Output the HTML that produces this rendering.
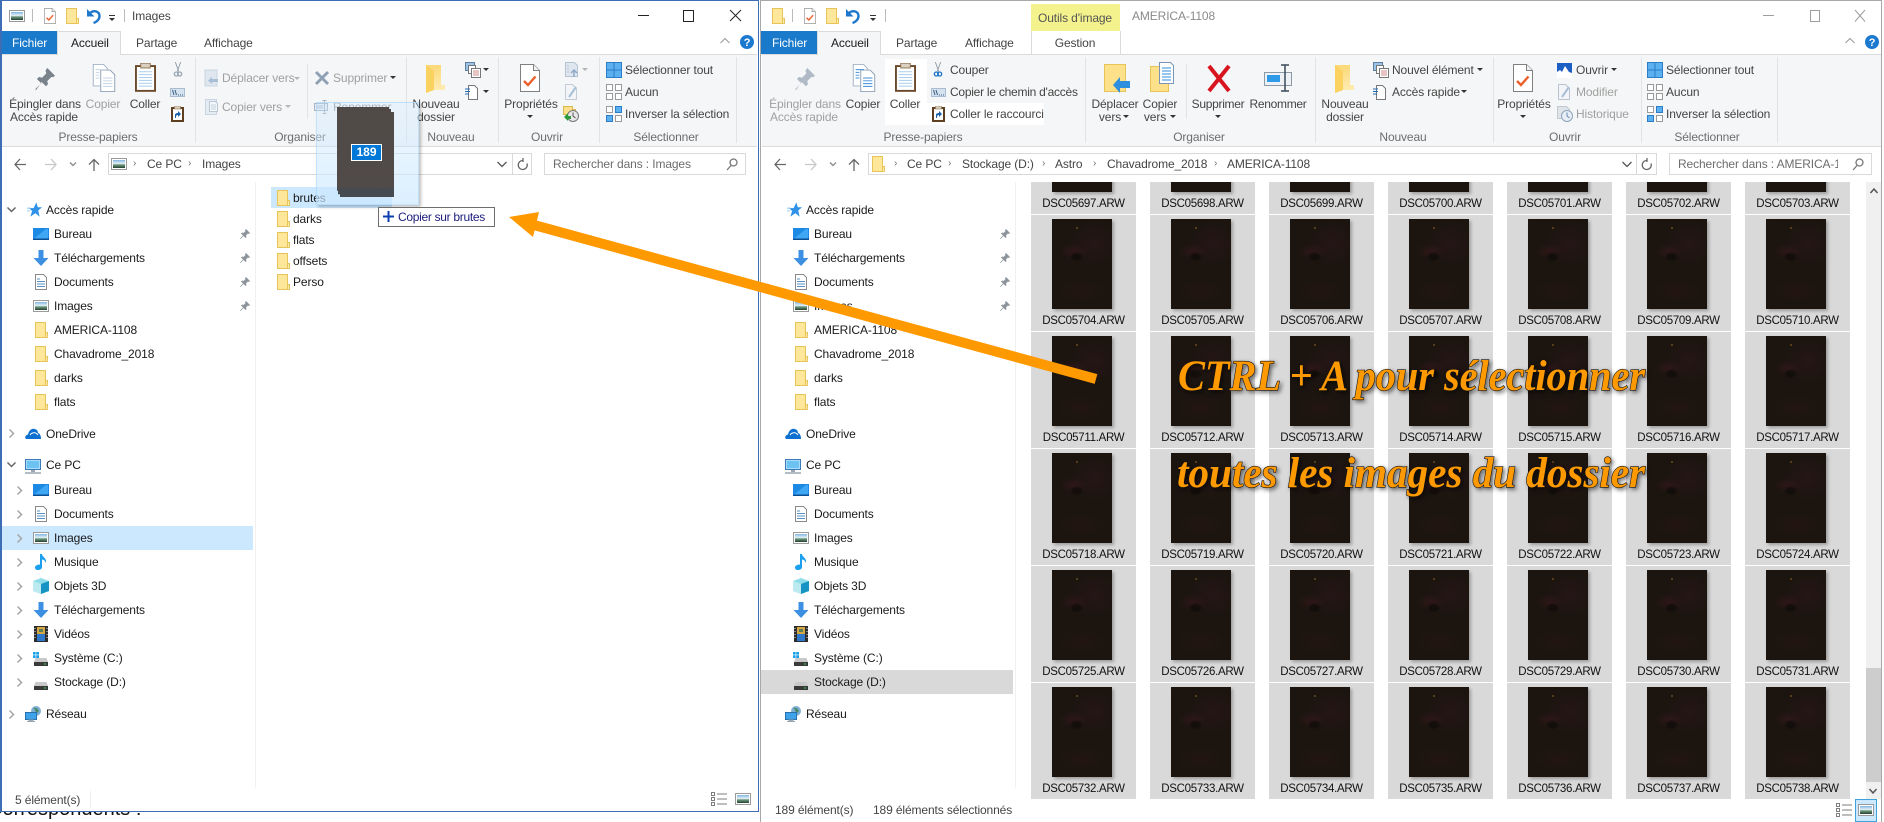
<!DOCTYPE html>
<html><head><meta charset="utf-8"><title>Images</title>
<style>
html,body{margin:0;padding:0;background:#fff}
#r{position:relative;width:1884px;height:822px;overflow:hidden;background:#fff;font:12px "Liberation Sans",sans-serif;color:#1a1a1a;letter-spacing:-.12px}
p{position:absolute;margin:0;white-space:nowrap;line-height:16px;height:16px}
.c{transform:translateX(-50%)}
.g{color:#a0a0a0}.m{color:#6d6d6d}.d{color:#444}
.k{position:absolute}
svg{position:absolute;overflow:visible}
u{position:absolute;width:0;height:0;border-left:3px solid transparent;border-right:3px solid transparent;border-top:3px solid #333}
u.l{border-top-color:#b5b5b5}
.cell{position:absolute;width:105px;height:116px;background:#d9d9d9}
.cell i{position:absolute;left:21px;top:4px;width:60px;height:90px;box-shadow:2px 2px 3px rgba(0,0,0,.28);
background:radial-gradient(circle at 25px 9px,#5f4320 0,#5f4320 .8px,transparent 1.3px),radial-gradient(ellipse 7px 5px at 41% 42%,rgba(14,11,9,.75) 50%,transparent),radial-gradient(ellipse 14px 8px at 36% 36%,rgba(70,24,36,.42),transparent),radial-gradient(ellipse 24px 22px at 70% 28%,rgba(50,22,34,.42),transparent),radial-gradient(ellipse 24px 12px at 50% 80%,rgba(46,20,22,.38),transparent),#1c150f}
.cell span{position:absolute;left:0;width:105px;text-align:center;top:98px;line-height:16px;font-size:11.5px;letter-spacing:-.3px;color:#111}
</style></head><body><div id="r">
<svg width="0" height="0" style="position:absolute">
<defs>
<linearGradient id="sky" x1="0" y1="0" x2="0" y2="1"><stop offset="0" stop-color="#7fb5e0"/><stop offset=".45" stop-color="#e8f2f8"/><stop offset=".6" stop-color="#6f9a80"/><stop offset="1" stop-color="#23402f"/></linearGradient>
<linearGradient id="nfg" x1="0" y1="0" x2="0" y2="1"><stop offset="0" stop-color="#fcd878"/><stop offset="1" stop-color="#fdeeb8"/></linearGradient>
<symbol id="fo" viewBox="0 0 13 16"><path d="M.5.500h10v10h2v5H.5z" fill="#fee79b" stroke="#e7c458"/><path d="M10.500 11v4.500h2" fill="#fff3c4" stroke="#e7c458"/></symbol>
<symbol id="im" viewBox="0 0 16 12"><rect x=".5" y=".5" width="15" height="11" fill="#fff" stroke="#9a9a9a"/><rect x="2" y="2" width="12" height="8" fill="url(#sky)"/></symbol>
<symbol id="de" viewBox="0 0 16 12"><rect width="16" height="12" fill="#1c8ae4"/><path d="M1 10.500L13 1h2v9.500z" fill="#3fa6f4"/><rect y="10.500" width="16" height="1.500" fill="#0a4f93"/></symbol>
<symbol id="dn" viewBox="0 0 16 16"><path d="M5.500 0h5v8h5L8 16 .5 8h5z" fill="#3d8fe2"/></symbol>
<symbol id="dc" viewBox="0 0 12 16"><path d="M.5.500h8l3 3v12H.5z" fill="#fff" stroke="#8a8a8a"/><path d="M2 5h3M2 7.500h8M2 10h8M2 12.500h8" stroke="#5a8fc4"/></symbol>
<symbol id="st" viewBox="0 0 16 16"><path d="M10 0l1.500 5H16l-4 3.500L13.500 15 9 11.500 3.500 15 5.500 9 2 6h5z" fill="#2f92e8"/><path d="M0 6h4M0 9h3" stroke="#8cc6f5"/></symbol>
<symbol id="mu" viewBox="0 0 14 16"><path d="M6 0h2c0 3 5 4 4 9-1-2-2-3.500-4-3.500V13c0 2-2 3-4 3s-3-1-3-2.500S3 10.500 6 10.500z" fill="#1aa0ef"/></symbol>
<symbol id="cu" viewBox="0 0 16 16"><path d="M8 0l8 3v10l-8 3-8-3V3z" fill="#8fdde8"/><path d="M8 6l8-3v10l-8 3z" fill="#1793c4"/><path d="M0 3l8 3v10l-8-3z" fill="#bdeaf0"/></symbol>
<symbol id="fi" viewBox="0 0 14 16"><rect width="14" height="16" fill="#2c2c2c"/><rect x="3" y="1" width="8" height="14" fill="#d4a845"/><rect x="3" y="8" width="8" height="7" fill="#2f78c9"/><rect x="5" y="3" width="4" height="3" fill="#5a7c5c"/><path d="M1 2v12M13 2v12" stroke="#ddd" stroke-dasharray="1 2"/></symbol>
<symbol id="dr" viewBox="0 0 14 8"><path d="M1.500 0h11L14 4v4H0V4z" fill="#c9c9c9"/><rect y="4" width="14" height="4" fill="#3a3a3a"/><rect x="10" y="5.500" width="2" height="1" fill="#35d04c"/></symbol>
<symbol id="wi" viewBox="0 0 6 6"><path d="M0 0h2.600v2.600H0zM3.200 0H6v2.600H3.200zM0 3.200h2.600V6H0zM3.200 3.200H6V6H3.200z" fill="#19a0ea"/></symbol>
<symbol id="cl" viewBox="0 0 16 11"><path d="M2 11c-3 0-2-4 1-4.500C4 2 7 0 10 1c2 .6 3 2 3 4 2 .3 3 3 3 6z" fill="#0d6fd0"/><path d="M5 7c2-3 6-3 8 0" fill="none" stroke="#fff"/></symbol>
<symbol id="pc" viewBox="0 0 16 15"><rect x=".5" y=".5" width="15" height="10" fill="#a8dcf8" stroke="#3a78b8"/><rect x="2" y="2" width="12" height="7" fill="#6cc2f0"/><path d="M6 11h4v2H6z" fill="#9aa6b0"/><path d="M0 14h16" stroke="#9aa6b0" stroke-width="1.500"/></symbol>
<symbol id="ne" viewBox="0 0 16 16"><circle cx="11" cy="5" r="5" fill="#7fb0d8"/><path d="M8 2c2 1 3 3 2 6 2 0 3-2 4-3-1-2-3-4-6-3z" fill="#4b8a6a"/><rect x=".5" y="6.500" width="11" height="7" fill="#3da2e8" stroke="#2a70ae"/><path d="M4 14h4v1H4zM2 15.500h8" stroke="#9aa6b0"/></symbol>
<symbol id="pn" viewBox="0 0 10 10"><path d="M6 0l4 4-1 1-1-.5L6 6.500 6.500 8l-1 1L3.500 7 .5 10 0 9.500 3 6.500 1 4.500l1-1 1.500.5L5.500 2 5 1z" fill="#8d949b"/></symbol>
<symbol id="pb" viewBox="0 0 24 28"><path d="M14 1l9 9-2 2-2-.5-5 5 1 3.500-2.500 2.500-5-5L1 27l-1-1 7-7-5-5 2.500-2.500L8 12.500l5-5-1-3z" fill="currentColor"/></symbol>
<symbol id="co" viewBox="0 0 24 30"><path d="M.5.500h11l4 4v19H.5z" fill="#fff" stroke="#9fb2c7"/><path d="M8.500 6.500h10l5 5v18h-15z" fill="#fff" stroke="#8ca0b8"/><path d="M3 6h9M3 9h4M3 12h4M3 15h4M11 15h10M11 18h10M11 21h10M11 24h10" stroke="currentColor"/></symbol>
<symbol id="cb" viewBox="0 0 22 30"><rect x="1" y="3" width="20" height="26" fill="#fff" stroke="#6b4a2c" stroke-width="2"/><path d="M4 9h14M4 12h14M4 15h14M4 18h14M4 21h14M4 24h14" stroke="#a9cdec"/><rect x="6" y="0" width="10" height="5" fill="#d9d0c2" stroke="#8f7352"/></symbol>
<symbol id="sc" viewBox="0 0 12 24"><path d="M2 0l5 14M10 0L5 14" stroke="#8b96a2" stroke-width="1.300" fill="none"/><circle cx="3.500" cy="18" r="3" fill="none" stroke="currentColor" stroke-width="2"/><circle cx="8.500" cy="18" r="3" fill="none" stroke="currentColor" stroke-width="2"/></symbol>
<symbol id="pa" viewBox="0 0 15 9"><rect x=".5" y=".5" width="14" height="8" fill="#d5e2f0" stroke="#a9bcd0"/><path d="M2.500 2l1.500 5M5 2l1.500 5" stroke="#3c5d82"/><path d="M8 7h1M10 7h1M12 7h1" stroke="#3c5d82"/></symbol>
<symbol id="sh" viewBox="0 0 13 16"><rect x="1" y="2" width="11" height="13" fill="#fff" stroke="#5e3f22" stroke-width="2"/><rect x="3.500" y="0" width="6" height="3" fill="#d9d0c2" stroke="#8f7352" stroke-width=".6"/><path d="M4 12V9c0-1.500 1.500-2 3-2V5l3 3-3 3V9c-1.500 0-2 .5-2 3z" fill="#1b5fa9"/></symbol>
<symbol id="nf" viewBox="0 0 20 28"><path d="M1 0h15v20h4v5H9l-8 3z" fill="url(#nfg)"/><path d="M1 0l8 6v19l-8 3z" fill="#fbd15f"/></symbol>
<symbol id="pr" viewBox="0 0 20 28"><path d="M.5.500h13l6 6v21H.5z" fill="#fff" stroke="#808080"/><path d="M13.500.5v6h6" fill="#f2f2f2" stroke="#808080"/><path d="M4 17l4 4L15.500 12.500" fill="none" stroke="#ec5f2b" stroke-width="2.400"/></symbol>
<symbol id="s4" viewBox="0 0 16 16"><rect width="16" height="16" fill="#fff"/><path d="M.5.500h15v15H.5zM8 0v16M0 8h16" fill="none" stroke="#2d7cc8" stroke-width="1"/><path d="M1 1h6.500v6.500H1zM8.500 1H15v6.500H8.500zM1 8.500h6.500V15H1zM8.500 8.500H15V15H8.500z" fill="#5bb0ef"/></symbol>
<symbol id="s0" viewBox="0 0 16 16"><path d="M.5.500h6v6h-6zM9.500.500h6v6h-6zM.5 9.500h6v6h-6zM9.500 9.500h6v6h-6z" fill="#fff" stroke="#9a9a9a"/></symbol>
<symbol id="si" viewBox="0 0 16 16"><path d="M.5.500h6v6h-6zM9.500 9.500h6v6h-6z" fill="#fff" stroke="#9a9a9a"/><path d="M9.500.500h6v6h-6zM.5 9.500h6v6h-6z" fill="#5bb0ef" stroke="#2d7cc8"/></symbol>
<symbol id="ne2" viewBox="0 0 14 16"><path d="M3.500 1.500h6l3 3v11h-9z" fill="#fff" stroke="#777"/><path d="M0 5h5M0 7.500h5M0 10h4" stroke="#2469b5"/></symbol>
<symbol id="nw" viewBox="0 0 16 16"><rect x=".5" y=".5" width="9" height="8" fill="#9cc4e8" stroke="#5e7f9e"/><rect x="3.500" y="3.500" width="7" height="8" fill="#fff" stroke="#777"/><rect x="6.500" y="6.500" width="9" height="9" fill="#fff" stroke="#777"/><path d="M8 9h6M8 11h6M8 13h6" stroke="#d08a8a"/></symbol>
<symbol id="ps" viewBox="0 0 16 14"><rect x=".5" y="3.500" width="13" height="7" fill="#e8eef5" stroke="#a8b4c0"/><rect x="2" y="5" width="7" height="4" fill="currentColor"/><path d="M10.500 1v12M8.500.5h4M8.500 13.500h4" stroke="#a8b4c0" fill="none"/></symbol>
<symbol id="hi" viewBox="0 0 16 16"><path d="M.5.500h9v3h3v5H.5z" fill="#fde08a" stroke="#d8b850"/><circle cx="10" cy="10" r="5.500" fill="#e8e8e8" stroke="#777"/><path d="M10 6.500V10l2.500 2" fill="none" stroke="#555"/><path d="M1 11l4-4v3h3v3H5v2z" fill="#2f9a3a"/></symbol>
</defs></svg>

<!-- LEFT WINDOW -->
<div class="k" style="left:0;top:0;width:759px;height:812px;background:#fff;border:1px solid #3d6db5;border-width:1px 1px 1px 2px;box-sizing:border-box"></div>
<svg style="left:9px;top:10px" width="16" height="12"><use href="#im" width="16" height="12"/></svg>
<div class="k" style="left:32px;top:9px;width:1px;height:13px;background:#bbb"></div>
<svg style="left:44px;top:8px" width="12" height="16"><use href="#pr" width="12" height="16"/></svg>
<svg style="left:66px;top:8px" width="13" height="16"><use href="#fo"/></svg>
<svg style="left:87px;top:8px" width="14" height="16" viewBox="0 0 14 16"><path d="M0 1v7.500h7.500z" fill="#1f78cc"/><path d="M3 5C7 1.500 12.500 3.500 12.500 8c0 3.500-3 6-6 7" fill="none" stroke="#1f78cc" stroke-width="2.400"/></svg>
<u style="left:109px;top:18px"></u><div class="k" style="left:109px;top:15px;width:6px;height:1px;background:#333"></div>
<div class="k" style="left:124px;top:9px;width:1px;height:13px;background:#bbb"></div>
<p style="left:132px;top:8px" class="d">Images</p>
<svg style="left:638px;top:9px" width="110" height="14" fill="none" stroke="#222"><path d="M0 6.500h11M45.500 1.500h10v11h-10zM92 1l11 11M103 1L92 12"/></svg>
<div class="k" style="left:2px;top:31px;width:755px;height:24px;border-bottom:1px solid #dadbdc;box-sizing:border-box"></div>
<div class="k" style="left:2px;top:31px;width:55px;height:23px;background:#1979ca"></div>
<div class="k" style="left:57px;top:31px;width:64px;height:25px;background:#f5f6f7;border:1px solid #dadbdc;border-bottom:0;box-sizing:border-box"></div>
<p style="left:12px;top:35px;color:#fff">Fichier</p>
<p style="left:71px;top:35px">Accueil</p><p style="left:136px;top:35px" class="d">Partage</p><p style="left:204px;top:35px" class="d">Affichage</p>
<svg style="left:720px;top:38px" width="10" height="6" fill="none" stroke="#999"><path d="M.5 5L5 .5 9.500 5"/></svg>
<svg style="left:740px;top:35px" width="14" height="14"><circle cx="7" cy="7" r="7" fill="#1b79d0"/><text x="7" y="11" text-anchor="middle" fill="#fff" font-size="11" font-weight="bold" font-family="Liberation Sans">?</text></svg>
<div class="k" style="left:2px;top:55px;width:755px;height:92px;background:#f5f6f7;border-bottom:1px solid #dadbdc;box-sizing:border-box"></div>
<div class="k" style="left:195px;top:57px;width:1px;height:86px;background:#e1e3e6"></div>
<div class="k" style="left:406px;top:57px;width:1px;height:86px;background:#e1e3e6"></div>
<div class="k" style="left:498px;top:57px;width:1px;height:86px;background:#e1e3e6"></div>
<div class="k" style="left:599px;top:57px;width:1px;height:86px;background:#e1e3e6"></div>
<div class="k" style="left:736px;top:57px;width:1px;height:86px;background:#e1e3e6"></div>
<div class="k" style="left:307px;top:64px;width:1px;height:55px;background:#e1e3e6"></div>
<svg style="left:35px;top:67px;color:#7a828b" width="21" height="24"><use href="#pb" width="21" height="24"/></svg>
<svg style="left:92px;top:64px;color:#c3d3e4" width="24" height="28"><use href="#co" width="24" height="28"/></svg>
<svg style="left:135px;top:63px" width="21" height="29"><use href="#cb" width="21" height="29"/></svg>
<svg style="left:172px;top:62px;color:#98a6b4" width="12" height="16"><use href="#sc" width="12" height="16"/></svg>
<svg style="left:170px;top:88px" width="15" height="9"><use href="#pa" width="15" height="9"/></svg>
<svg style="left:171px;top:106px" width="13" height="16"><use href="#sh" width="13" height="16"/></svg>
<p class="c d" style="left:45px;top:96px">Épingler dans</p><p class="c d" style="left:44px;top:109px">Accès rapide</p>
<p class="c g" style="left:103px;top:96px">Copier</p><p class="c d" style="left:145px;top:96px">Coller</p>
<svg style="left:205px;top:70px" width="14" height="17"><path d="M0 0h12v16H0z" fill="#dfe6ee" stroke="#c9d5e2"/><path d="M13 9v3H7v2l-4-3.500L7 7v2z" fill="#a8bfd8"/></svg>
<svg style="left:205px;top:99px" width="14" height="16"><path d="M.5.500h11v15H.5z" fill="#e6ecf3" stroke="#c9d5e2"/><path d="M4.500 2.500h6l2 2v8h-8z" fill="#f5f8fb" stroke="#b9c6d4"/><path d="M6 6h5M6 8h5M6 10h5" stroke="#c2cfdd"/></svg>
<p class="g" style="left:222px;top:70px">Déplacer vers</p><u class="l" style="left:294px;top:77px"></u>
<p class="g" style="left:222px;top:99px">Copier vers</p><u class="l" style="left:285px;top:105px"></u>
<svg style="left:315px;top:71px" width="14" height="14" stroke="#91a1b5" stroke-width="3"><path d="M1 1l12 12M13 1L1 13"/></svg>
<p class="g" style="left:333px;top:70px">Supprimer</p><u style="left:390px;top:76px"></u>
<svg style="left:314px;top:100px;color:#c8d4e0" width="16" height="16"><use href="#ps" width="16" height="14"/></svg>
<p class="g" style="left:333px;top:99px">Renommer</p>
<svg style="left:425px;top:65px" width="20" height="28"><use href="#nf" width="20" height="28"/></svg>
<svg style="left:465px;top:62px" width="16" height="16"><use href="#nw" width="16" height="16"/></svg>
<u style="left:483px;top:68px"></u>
<svg style="left:465px;top:84px" width="14" height="16"><use href="#ne2" width="14" height="16"/></svg>
<u style="left:483px;top:90px"></u>
<p class="c d" style="left:436px;top:96px">Nouveau</p><p class="c d" style="left:436px;top:109px">dossier</p>
<svg style="left:520px;top:64px" width="20" height="28"><use href="#pr" width="20" height="28"/></svg>
<p class="c d" style="left:531px;top:96px">Propriétés</p><u style="left:527px;top:115px"></u>
<svg style="left:565px;top:62px" width="14" height="16"><path d="M.5.500h9l3 3v11H.5z" fill="#dfe6ee" stroke="#b4c2d2"/><path d="M9 15V9M6 11l3-3 3 3" stroke="#8faacc" fill="none" stroke-width="1.500"/><path d="M2 4h2M2 7h2M2 10h2" stroke="#b4c2d2"/></svg>
<u class="l" style="left:582px;top:68px"></u>
<svg style="left:565px;top:84px" width="14" height="16"><path d="M.5.500h7l4 4v11H.5z" fill="#f2f4f7" stroke="#c3ccd6"/><path d="M4 13l7-10" stroke="#a8bfd8" stroke-width="2"/></svg>
<svg style="left:563px;top:106px" width="16" height="16"><use href="#hi" width="16" height="16"/></svg>
<svg style="left:606px;top:62px" width="16" height="16"><use href="#s4" width="16" height="16"/></svg>
<svg style="left:606px;top:84px" width="16" height="16"><use href="#s0" width="16" height="16"/></svg>
<svg style="left:606px;top:106px" width="16" height="16"><use href="#si" width="16" height="16"/></svg>
<p class="d" style="left:625px;top:62px">Sélectionner tout</p><p class="d" style="left:625px;top:84px">Aucun</p><p class="d" style="left:625px;top:106px">Inverser la sélection</p>
<p class="c m" style="left:98px;top:129px">Presse-papiers</p><p class="c m" style="left:300px;top:129px">Organiser</p><p class="c m" style="left:451px;top:129px">Nouveau</p><p class="c m" style="left:547px;top:129px">Ouvrir</p><p class="c m" style="left:666px;top:129px">Sélectionner</p>
<svg style="left:14px;top:158px" width="92" height="14" fill="none" stroke="#666" stroke-width="1.300"><path d="M1 6.500h11M6 1L1 6.500 6 12"/><path d="M31 6.500h11M37 1l5 5.500L37 12" stroke="#c6c6c6"/><path d="M56 4.500L59 7.500 62 4.500" stroke="#888"/><path d="M80 13V1.500M75 6.500L80 1.500 85 6.500"/></svg>
<div class="k" style="left:108px;top:153px;width:424px;height:22px;border:1px solid #d9d9d9;box-sizing:border-box;background:#fff"></div>
<div class="k" style="left:512px;top:153px;width:1px;height:22px;background:#d9d9d9"></div>
<svg style="left:111px;top:158px" width="16" height="12"><use href="#im" width="16" height="12"/></svg>
<p class="m" style="left:133px;top:156px;font-size:10px">›</p><p class="d" style="left:147px;top:156px">Ce PC</p><p class="m" style="left:188px;top:156px;font-size:10px">›</p><p class="d" style="left:202px;top:156px">Images</p>
<svg style="left:497px;top:161px" width="10" height="7" fill="none" stroke="#555" stroke-width="1.300"><path d="M.5 1L5 5.500 9.500 1"/></svg>
<svg style="left:517px;top:158px" width="11" height="13" fill="none" stroke="#666" stroke-width="1.300"><path d="M6 2.500a4.500 4.500 0 1 0 4 3M6 0v4"/></svg>
<div class="k" style="left:544px;top:153px;width:202px;height:22px;border:1px solid #d9d9d9;box-sizing:border-box"></div>
<p class="m" style="left:553px;top:156px">Rechercher dans : Images</p>
<svg style="left:726px;top:158px" width="12" height="13" fill="none" stroke="#777" stroke-width="1.300"><circle cx="7.500" cy="4.500" r="3.500"/><path d="M5 7.500L1 12"/></svg>
<div class="k" style="left:255px;top:182px;width:1px;height:606px;background:#f0f0f0"></div>
<!-- left file list -->
<div class="k" style="left:271px;top:187px;width:121px;height:21px;background:#cce8ff"></div>
<svg style="left:277px;top:190px" width="13" height="16"><use href="#fo"/></svg><p style="left:293px;top:190px">brutes</p>
<svg style="left:277px;top:211px" width="13" height="16"><use href="#fo"/></svg><p style="left:293px;top:211px">darks</p>
<svg style="left:277px;top:232px" width="13" height="16"><use href="#fo"/></svg><p style="left:293px;top:232px">flats</p>
<svg style="left:277px;top:253px" width="13" height="16"><use href="#fo"/></svg><p style="left:293px;top:253px">offsets</p>
<svg style="left:277px;top:274px" width="13" height="16"><use href="#fo"/></svg><p style="left:293px;top:274px">Perso</p>
<!-- left nav -->
<div class="k" style="left:2px;top:526px;width:251px;height:24px;background:#cce8ff"></div>
<svg style="left:7px;top:207px" width="9" height="6" fill="none" stroke="#666" stroke-width="1.500"><path d="M.5.500L4.500 4.500 8.500.5"/></svg>
<svg style="left:7px;top:462px" width="9" height="6" fill="none" stroke="#666" stroke-width="1.500"><path d="M.5.500L4.500 4.500 8.500.5"/></svg>
<svg style="left:9px;top:429px" width="6" height="9" fill="none" stroke="#a6a6a6" stroke-width="1.500"><path d="M.5.500L4.500 4.500.5 8.500"/></svg>
<svg style="left:9px;top:710px" width="6" height="9" fill="none" stroke="#a6a6a6" stroke-width="1.500"><path d="M.5.500L4.500 4.500.5 8.500"/></svg>
<svg style="left:17px;top:486px" width="6" height="201" fill="none" stroke="#a6a6a6" stroke-width="1.500"><path d="M.5.500L4.500 4.500.5 8.500M.5 24.500L4.500 28.500.5 32.500M.5 48.500L4.500 52.500.5 56.500M.5 72.500L4.500 76.500.5 80.500M.5 96.500L4.500 100.500.5 104.500M.5 120.500L4.500 124.500.5 128.500M.5 144.500L4.500 148.500.5 152.500M.5 168.500L4.500 172.500.5 176.500M.5 192.500L4.500 196.500.5 200.500"/></svg>

<!-- RIGHT WINDOW -->
<div class="k" style="left:760px;top:0;width:1122px;height:822px;background:#fff;border-left:1.500px solid #a8a8a8;border-right:1px solid #a8a8a8;border-top:1.500px solid #a8a8a8;box-sizing:border-box"></div>
<svg style="left:772px;top:8px" width="13" height="16"><use href="#fo"/></svg>
<div class="k" style="left:792px;top:9px;width:1px;height:13px;background:#bbb"></div>
<svg style="left:804px;top:8px" width="12" height="16"><use href="#pr" width="12" height="16"/></svg>
<svg style="left:826px;top:8px" width="13" height="16"><use href="#fo"/></svg>
<svg style="left:846px;top:8px" width="14" height="16" viewBox="0 0 14 16"><path d="M0 1v7.500h7.500z" fill="#1f78cc"/><path d="M3 5C7 1.500 12.500 3.500 12.500 8c0 3.500-3 6-6 7" fill="none" stroke="#1f78cc" stroke-width="2.400"/></svg>
<u style="left:870px;top:18px"></u><div class="k" style="left:870px;top:15px;width:6px;height:1px;background:#333"></div>
<div class="k" style="left:885px;top:9px;width:1px;height:13px;background:#bbb"></div>
<div class="k" style="left:1031px;top:4px;width:89px;height:27px;background:#f3f28c"></div>
<p class="c" style="left:1075px;top:10px;color:#555">Outils d'image</p>
<p class="m" style="left:1132px;top:8px;color:#8a8a8a">AMERICA-1108</p>
<svg style="left:1763px;top:9px" width="105" height="14" fill="none" stroke="#9e9e9e"><path d="M0 6.500h11M47.500 1.500h9v11h-9zM92 1l10 11.500M102 1L92 12.500"/></svg>
<div class="k" style="left:762px;top:31px;width:1119px;height:24px;border-bottom:1px solid #dadbdc;box-sizing:border-box"></div>
<div class="k" style="left:761px;top:31px;width:56px;height:23px;background:#1979ca"></div>
<div class="k" style="left:817px;top:31px;width:64px;height:25px;background:#f5f6f7;border:1px solid #dadbdc;border-bottom:0;box-sizing:border-box"></div>
<div class="k" style="left:1031px;top:31px;width:90px;height:24px;border:1px solid #dadbdc;border-width:0 1px;box-sizing:border-box"></div>
<p style="left:772px;top:35px;color:#fff">Fichier</p>
<p style="left:831px;top:35px">Accueil</p><p style="left:896px;top:35px" class="d">Partage</p><p style="left:965px;top:35px" class="d">Affichage</p><p class="c d" style="left:1075px;top:35px">Gestion</p>
<svg style="left:1845px;top:38px" width="10" height="6" fill="none" stroke="#999"><path d="M.5 5L5 .5 9.500 5"/></svg>
<svg style="left:1865px;top:35px" width="14" height="14"><circle cx="7" cy="7" r="7" fill="#1b79d0"/><text x="7" y="11" text-anchor="middle" fill="#fff" font-size="11" font-weight="bold" font-family="Liberation Sans">?</text></svg>
<div class="k" style="left:762px;top:55px;width:1119px;height:92px;background:#f5f6f7;border-bottom:1px solid #dadbdc;box-sizing:border-box"></div>
<div class="k" style="left:885px;top:59px;width:42px;height:66px;background:#fff"></div>
<div class="k" style="left:927px;top:103px;width:117px;height:22px;background:#fff"></div>
<div class="k" style="left:1085px;top:57px;width:1px;height:86px;background:#e1e3e6"></div>
<div class="k" style="left:1315px;top:57px;width:1px;height:86px;background:#e1e3e6"></div>
<div class="k" style="left:1493px;top:57px;width:1px;height:86px;background:#e1e3e6"></div>
<div class="k" style="left:1641px;top:57px;width:1px;height:86px;background:#e1e3e6"></div>
<div class="k" style="left:1777px;top:57px;width:1px;height:86px;background:#e1e3e6"></div>
<div class="k" style="left:1186px;top:64px;width:1px;height:55px;background:#e1e3e6"></div>
<svg style="left:795px;top:67px;color:#b0bac6" width="21" height="24"><use href="#pb" width="21" height="24"/></svg>
<svg style="left:852px;top:64px;color:#3f8fd8" width="24" height="28"><use href="#co" width="24" height="28"/></svg>
<svg style="left:895px;top:63px" width="21" height="29"><use href="#cb" width="21" height="29"/></svg>
<svg style="left:932px;top:62px;color:#1b74c9" width="12" height="16"><use href="#sc" width="12" height="16"/></svg>
<svg style="left:931px;top:88px" width="15" height="9"><use href="#pa" width="15" height="9"/></svg>
<svg style="left:932px;top:106px" width="13" height="16"><use href="#sh" width="13" height="16"/></svg>
<p class="c g" style="left:805px;top:96px">Épingler dans</p><p class="c g" style="left:804px;top:109px">Accès rapide</p>
<p class="c d" style="left:863px;top:96px">Copier</p><p class="c d" style="left:905px;top:96px">Coller</p>
<p class="d" style="left:950px;top:62px">Couper</p><p class="d" style="left:950px;top:84px;letter-spacing:-.25px">Copier le chemin d'accès</p><p class="d" style="left:950px;top:106px">Coller le raccourci</p>
<svg style="left:1104px;top:64px" width="26" height="28"><path d="M.5.500h21v27H.5z" fill="#fde08a" stroke="#e7c458"/><path d="M26 17v7H16v5l-7-8 7-8v4z" fill="#2f8fdf"/></svg>
<svg style="left:1150px;top:62px" width="26" height="30"><path d="M.5 4.500h18v25H.5z" fill="#fde08a" stroke="#e7c458"/><path d="M9.500.5h11l3 3v18h-14z" fill="#fff" stroke="#7a94b5"/><path d="M12 6h9M12 9h9M12 12h9M12 15h9M12 18h9" stroke="#2f8fdf"/></svg>
<svg style="left:1206px;top:65px" width="26" height="27" fill="none" stroke="#d8141f" stroke-width="4"><path d="M3 1l20 25M23 1L3 26"/></svg>
<svg style="left:1264px;top:64px" width="30" height="28" fill="none"><rect x=".5" y="8.500" width="27" height="13" fill="#eef2f6" stroke="#8d99a6"/><rect x="3" y="11" width="13" height="7" fill="#2f9be8"/><path d="M21 1v26M17 1h8M17 27h8" stroke="#3a4a5a" stroke-width="1.500"/></svg>
<p class="c d" style="left:1115px;top:96px">Déplacer</p><p class="c d" style="left:1110px;top:109px">vers</p><u style="left:1123px;top:115px"></u>
<p class="c d" style="left:1160px;top:96px">Copier</p><p class="c d" style="left:1155px;top:109px">vers</p><u style="left:1170px;top:115px"></u>
<p class="c d" style="left:1218px;top:96px;letter-spacing:-.3px">Supprimer</p><u style="left:1215px;top:115px"></u><p class="c d" style="left:1278px;top:96px;letter-spacing:-.3px">Renommer</p>
<svg style="left:1334px;top:65px" width="20" height="28"><use href="#nf" width="20" height="28"/></svg>
<svg style="left:1373px;top:62px" width="16" height="16"><use href="#nw" width="16" height="16"/></svg>
<svg style="left:1373px;top:84px" width="14" height="16"><use href="#ne2" width="14" height="16"/></svg>
<p class="d" style="left:1392px;top:62px">Nouvel élément</p><u style="left:1477px;top:68px"></u>
<p class="d" style="left:1392px;top:84px">Accès rapide</p><u style="left:1461px;top:90px"></u>
<p class="c d" style="left:1345px;top:96px">Nouveau</p><p class="c d" style="left:1345px;top:109px">dossier</p>
<svg style="left:1513px;top:64px" width="20" height="28"><use href="#pr" width="20" height="28"/></svg>
<p class="c d" style="left:1524px;top:96px">Propriétés</p><u style="left:1520px;top:115px"></u>
<svg style="left:1557px;top:63px" width="15" height="15"><rect width="15" height="15" fill="#fff"/><rect width="15" height="10" fill="#1c5fc4"/><path d="M0 9l3-2 2 2 3-6 4 6 3 1v5H0z" fill="#fff"/></svg>
<svg style="left:1558px;top:84px" width="14" height="16"><path d="M.5.500h7l4 4v11H.5z" fill="#f2f4f7" stroke="#b8c3cf"/><path d="M4 13l7-10" stroke="#a8bfd8" stroke-width="2"/></svg>
<svg style="left:1557px;top:106px" width="16" height="16"><path d="M.5.500h9l3 3v9H.5z" fill="#dfe4ea" stroke="#c0c8d0"/><circle cx="10" cy="10" r="5.500" fill="#e8eef5" stroke="#8fa4bb"/><path d="M10 6.500V10l2.500 2" fill="none" stroke="#6a8bb0"/></svg>
<p class="d" style="left:1576px;top:62px">Ouvrir</p><u style="left:1611px;top:68px"></u>
<p class="g" style="left:1576px;top:84px">Modifier</p><p class="g" style="left:1576px;top:106px">Historique</p>
<svg style="left:1647px;top:62px" width="16" height="16"><use href="#s4" width="16" height="16"/></svg>
<svg style="left:1647px;top:84px" width="16" height="16"><use href="#s0" width="16" height="16"/></svg>
<svg style="left:1647px;top:106px" width="16" height="16"><use href="#si" width="16" height="16"/></svg>
<p class="d" style="left:1666px;top:62px">Sélectionner tout</p><p class="d" style="left:1666px;top:84px">Aucun</p><p class="d" style="left:1666px;top:106px">Inverser la sélection</p>
<p class="c m" style="left:923px;top:129px">Presse-papiers</p><p class="c m" style="left:1199px;top:129px">Organiser</p><p class="c m" style="left:1403px;top:129px">Nouveau</p><p class="c m" style="left:1565px;top:129px">Ouvrir</p><p class="c m" style="left:1707px;top:129px">Sélectionner</p>
<svg style="left:774px;top:158px" width="92" height="14" fill="none" stroke="#666" stroke-width="1.300"><path d="M1 6.500h11M6 1L1 6.500 6 12"/><path d="M31 6.500h11M37 1l5 5.500L37 12" stroke="#c6c6c6"/><path d="M56 4.500L59 7.500 62 4.500" stroke="#888"/><path d="M80 13V1.500M75 6.500L80 1.500 85 6.500"/></svg>
<div class="k" style="left:868px;top:153px;width:789px;height:22px;border:1px solid #d9d9d9;box-sizing:border-box"></div>
<div class="k" style="left:1636px;top:153px;width:1px;height:22px;background:#d9d9d9"></div>
<svg style="left:872px;top:156px" width="13" height="16"><use href="#fo"/></svg>
<p class="m" style="left:894px;top:156px;font-size:10px">›</p><p class="d" style="left:907px;top:156px">Ce PC</p>
<p class="m" style="left:948px;top:156px;font-size:10px">›</p><p class="d" style="left:962px;top:156px">Stockage (D:)</p>
<p class="m" style="left:1042px;top:156px;font-size:10px">›</p><p class="d" style="left:1055px;top:156px">Astro</p>
<p class="m" style="left:1093px;top:156px;font-size:10px">›</p><p class="d" style="left:1107px;top:156px">Chavadrome_2018</p>
<p class="m" style="left:1214px;top:156px;font-size:10px">›</p><p class="d" style="left:1227px;top:156px">AMERICA-1108</p>
<svg style="left:1622px;top:161px" width="10" height="7" fill="none" stroke="#555" stroke-width="1.300"><path d="M.5 1L5 5.500 9.500 1"/></svg>
<svg style="left:1641px;top:158px" width="11" height="13" fill="none" stroke="#666" stroke-width="1.300"><path d="M6 2.500a4.500 4.500 0 1 0 4 3M6 0v4"/></svg>
<div class="k" style="left:1669px;top:153px;width:203px;height:22px;border:1px solid #d9d9d9;box-sizing:border-box"></div>
<p class="m" style="left:1678px;top:156px;width:160px;overflow:hidden">Rechercher dans : AMERICA-1</p>
<svg style="left:1852px;top:158px" width="12" height="13" fill="none" stroke="#777" stroke-width="1.300"><circle cx="7.500" cy="4.500" r="3.500"/><path d="M5 7.500L1 12"/></svg>
<div class="k" style="left:1015px;top:182px;width:1px;height:606px;background:#f0f0f0"></div>
<div class="k" style="left:761px;top:670px;width:252px;height:24px;background:#d9d9d9"></div>

<!-- grid -->
<div class="k" style="left:1031px;top:182px;width:825px;height:618px;overflow:hidden">
<div class="cell" style="left:0;top:-84px"><i></i><span>DSC05697.ARW</span></div><div class="cell" style="left:119px;top:-84px"><i></i><span>DSC05698.ARW</span></div><div class="cell" style="left:238px;top:-84px"><i></i><span>DSC05699.ARW</span></div><div class="cell" style="left:357px;top:-84px"><i></i><span>DSC05700.ARW</span></div><div class="cell" style="left:476px;top:-84px"><i></i><span>DSC05701.ARW</span></div><div class="cell" style="left:595px;top:-84px"><i></i><span>DSC05702.ARW</span></div><div class="cell" style="left:714px;top:-84px"><i></i><span>DSC05703.ARW</span></div>
<div class="cell" style="left:0;top:33px"><i></i><span>DSC05704.ARW</span></div><div class="cell" style="left:119px;top:33px"><i></i><span>DSC05705.ARW</span></div><div class="cell" style="left:238px;top:33px"><i></i><span>DSC05706.ARW</span></div><div class="cell" style="left:357px;top:33px"><i></i><span>DSC05707.ARW</span></div><div class="cell" style="left:476px;top:33px"><i></i><span>DSC05708.ARW</span></div><div class="cell" style="left:595px;top:33px"><i></i><span>DSC05709.ARW</span></div><div class="cell" style="left:714px;top:33px"><i></i><span>DSC05710.ARW</span></div>
<div class="cell" style="left:0;top:150px"><i></i><span>DSC05711.ARW</span></div><div class="cell" style="left:119px;top:150px"><i></i><span>DSC05712.ARW</span></div><div class="cell" style="left:238px;top:150px"><i></i><span>DSC05713.ARW</span></div><div class="cell" style="left:357px;top:150px"><i></i><span>DSC05714.ARW</span></div><div class="cell" style="left:476px;top:150px"><i></i><span>DSC05715.ARW</span></div><div class="cell" style="left:595px;top:150px"><i></i><span>DSC05716.ARW</span></div><div class="cell" style="left:714px;top:150px"><i></i><span>DSC05717.ARW</span></div>
<div class="cell" style="left:0;top:267px"><i></i><span>DSC05718.ARW</span></div><div class="cell" style="left:119px;top:267px"><i></i><span>DSC05719.ARW</span></div><div class="cell" style="left:238px;top:267px"><i></i><span>DSC05720.ARW</span></div><div class="cell" style="left:357px;top:267px"><i></i><span>DSC05721.ARW</span></div><div class="cell" style="left:476px;top:267px"><i></i><span>DSC05722.ARW</span></div><div class="cell" style="left:595px;top:267px"><i></i><span>DSC05723.ARW</span></div><div class="cell" style="left:714px;top:267px"><i></i><span>DSC05724.ARW</span></div>
<div class="cell" style="left:0;top:384px"><i></i><span>DSC05725.ARW</span></div><div class="cell" style="left:119px;top:384px"><i></i><span>DSC05726.ARW</span></div><div class="cell" style="left:238px;top:384px"><i></i><span>DSC05727.ARW</span></div><div class="cell" style="left:357px;top:384px"><i></i><span>DSC05728.ARW</span></div><div class="cell" style="left:476px;top:384px"><i></i><span>DSC05729.ARW</span></div><div class="cell" style="left:595px;top:384px"><i></i><span>DSC05730.ARW</span></div><div class="cell" style="left:714px;top:384px"><i></i><span>DSC05731.ARW</span></div>
<div class="cell" style="left:0;top:501px"><i></i><span>DSC05732.ARW</span></div><div class="cell" style="left:119px;top:501px"><i></i><span>DSC05733.ARW</span></div><div class="cell" style="left:238px;top:501px"><i></i><span>DSC05734.ARW</span></div><div class="cell" style="left:357px;top:501px"><i></i><span>DSC05735.ARW</span></div><div class="cell" style="left:476px;top:501px"><i></i><span>DSC05736.ARW</span></div><div class="cell" style="left:595px;top:501px"><i></i><span>DSC05737.ARW</span></div><div class="cell" style="left:714px;top:501px"><i></i><span>DSC05738.ARW</span></div>
</div>
<!-- scrollbar -->
<div class="k" style="left:1866px;top:182px;width:15px;height:617px;background:#f0f0f0"></div>
<div class="k" style="left:1866px;top:668px;width:15px;height:114px;background:#cdcdcd"></div>
<svg style="left:1870px;top:188px" width="8" height="6" fill="none" stroke="#555" stroke-width="1.500"><path d="M.5 5L4 1l3.500 4"/></svg>
<svg style="left:1869px;top:788px" width="8" height="6" fill="none" stroke="#555" stroke-width="1.500"><path d="M.5 1L4 5l3.500-4"/></svg>

<!-- status bars -->
<p class="d" style="left:15px;top:792px">5 élément(s)</p>
<div class="k" style="left:90px;top:791px;width:1px;height:17px;background:#eee"></div>
<svg style="left:711px;top:792px" width="17" height="14" fill="none" stroke="#7d7d7d"><path d="M.5.500h3v3h-3zM.5 5.500h3v3h-3zM.5 10.500h3v3h-3zM6 2h10M6 7h10M6 12h10"/></svg>
<svg style="left:735px;top:793px" width="16" height="12"><use href="#im" width="16" height="12"/></svg>
<p class="d" style="left:775px;top:802px">189 élément(s)</p><p class="d" style="left:873px;top:802px">189 éléments sélectionnés</p>
<svg style="left:1836px;top:803px" width="17" height="14" fill="none" stroke="#7d7d7d"><path d="M.5.500h3v3h-3zM.5 5.500h3v3h-3zM.5 10.500h3v3h-3zM6 2h10M6 7h10M6 12h10"/></svg>
<div class="k" style="left:1855px;top:799px;width:22px;height:23px;background:#cce8ff;border:1px solid #3fa3d8;box-sizing:border-box"></div>
<svg style="left:1858px;top:804px" width="16" height="12"><use href="#im" width="16" height="12"/></svg>

<!-- nav left -->
<div class="k" style="left:0;top:0">
<svg style="left:27px;top:202px" width="15" height="16"><use href="#st"/></svg><p style="left:46px;top:202px">Accès rapide</p>
<svg style="left:33px;top:228px" width="16" height="12"><use href="#de"/></svg><p style="left:54px;top:226px">Bureau</p><svg style="left:240px;top:229px" width="10" height="10"><use href="#pn"/></svg>
<svg style="left:33px;top:250px" width="16" height="16"><use href="#dn"/></svg><p style="left:54px;top:250px">Téléchargements</p><svg style="left:240px;top:253px" width="10" height="10"><use href="#pn"/></svg>
<svg style="left:35px;top:274px" width="12" height="16"><use href="#dc"/></svg><p style="left:54px;top:274px">Documents</p><svg style="left:240px;top:277px" width="10" height="10"><use href="#pn"/></svg>
<svg style="left:33px;top:300px" width="16" height="12"><use href="#im"/></svg><p style="left:54px;top:298px">Images</p><svg style="left:240px;top:301px" width="10" height="10"><use href="#pn"/></svg>
<svg style="left:35px;top:322px" width="13" height="16"><use href="#fo"/></svg><p style="left:54px;top:322px">AMERICA-1108</p>
<svg style="left:35px;top:346px" width="13" height="16"><use href="#fo"/></svg><p style="left:54px;top:346px">Chavadrome_2018</p>
<svg style="left:35px;top:370px" width="13" height="16"><use href="#fo"/></svg><p style="left:54px;top:370px">darks</p>
<svg style="left:35px;top:394px" width="13" height="16"><use href="#fo"/></svg><p style="left:54px;top:394px">flats</p>
<svg style="left:25px;top:428px" width="16" height="11"><use href="#cl"/></svg><p style="left:46px;top:426px">OneDrive</p>
<svg style="left:25px;top:459px" width="16" height="15"><use href="#pc"/></svg><p style="left:46px;top:457px">Ce PC</p>
<svg style="left:33px;top:484px" width="16" height="12"><use href="#de"/></svg><p style="left:54px;top:482px">Bureau</p>
<svg style="left:35px;top:506px" width="12" height="16"><use href="#dc"/></svg><p style="left:54px;top:506px">Documents</p>
<svg style="left:33px;top:532px" width="16" height="12"><use href="#im"/></svg><p style="left:54px;top:530px">Images</p>
<svg style="left:34px;top:554px" width="14" height="16"><use href="#mu"/></svg><p style="left:54px;top:554px">Musique</p>
<svg style="left:33px;top:578px" width="16" height="16"><use href="#cu"/></svg><p style="left:54px;top:578px">Objets 3D</p>
<svg style="left:33px;top:602px" width="16" height="16"><use href="#dn"/></svg><p style="left:54px;top:602px">Téléchargements</p>
<svg style="left:34px;top:626px" width="14" height="16"><use href="#fi"/></svg><p style="left:54px;top:626px">Vidéos</p>
<svg style="left:33px;top:652px" width="6" height="6"><use href="#wi"/></svg><svg style="left:34px;top:658px" width="14" height="8"><use href="#dr"/></svg><p style="left:54px;top:650px">Système (C:)</p>
<svg style="left:34px;top:682px" width="14" height="8"><use href="#dr"/></svg><p style="left:54px;top:674px">Stockage (D:)</p>
<svg style="left:25px;top:706px" width="16" height="16"><use href="#ne"/></svg><p style="left:46px;top:706px">Réseau</p>
</div>
<!-- nav right -->
<div class="k" style="left:760px;top:0">
<svg style="left:27px;top:202px" width="15" height="16"><use href="#st"/></svg><p style="left:46px;top:202px">Accès rapide</p>
<svg style="left:33px;top:228px" width="16" height="12"><use href="#de"/></svg><p style="left:54px;top:226px">Bureau</p><svg style="left:240px;top:229px" width="10" height="10"><use href="#pn"/></svg>
<svg style="left:33px;top:250px" width="16" height="16"><use href="#dn"/></svg><p style="left:54px;top:250px">Téléchargements</p><svg style="left:240px;top:253px" width="10" height="10"><use href="#pn"/></svg>
<svg style="left:35px;top:274px" width="12" height="16"><use href="#dc"/></svg><p style="left:54px;top:274px">Documents</p><svg style="left:240px;top:277px" width="10" height="10"><use href="#pn"/></svg>
<svg style="left:33px;top:300px" width="16" height="12"><use href="#im"/></svg><p style="left:54px;top:298px">Images</p><svg style="left:240px;top:301px" width="10" height="10"><use href="#pn"/></svg>
<svg style="left:35px;top:322px" width="13" height="16"><use href="#fo"/></svg><p style="left:54px;top:322px">AMERICA-1108</p>
<svg style="left:35px;top:346px" width="13" height="16"><use href="#fo"/></svg><p style="left:54px;top:346px">Chavadrome_2018</p>
<svg style="left:35px;top:370px" width="13" height="16"><use href="#fo"/></svg><p style="left:54px;top:370px">darks</p>
<svg style="left:35px;top:394px" width="13" height="16"><use href="#fo"/></svg><p style="left:54px;top:394px">flats</p>
<svg style="left:25px;top:428px" width="16" height="11"><use href="#cl"/></svg><p style="left:46px;top:426px">OneDrive</p>
<svg style="left:25px;top:459px" width="16" height="15"><use href="#pc"/></svg><p style="left:46px;top:457px">Ce PC</p>
<svg style="left:33px;top:484px" width="16" height="12"><use href="#de"/></svg><p style="left:54px;top:482px">Bureau</p>
<svg style="left:35px;top:506px" width="12" height="16"><use href="#dc"/></svg><p style="left:54px;top:506px">Documents</p>
<svg style="left:33px;top:532px" width="16" height="12"><use href="#im"/></svg><p style="left:54px;top:530px">Images</p>
<svg style="left:34px;top:554px" width="14" height="16"><use href="#mu"/></svg><p style="left:54px;top:554px">Musique</p>
<svg style="left:33px;top:578px" width="16" height="16"><use href="#cu"/></svg><p style="left:54px;top:578px">Objets 3D</p>
<svg style="left:33px;top:602px" width="16" height="16"><use href="#dn"/></svg><p style="left:54px;top:602px">Téléchargements</p>
<svg style="left:34px;top:626px" width="14" height="16"><use href="#fi"/></svg><p style="left:54px;top:626px">Vidéos</p>
<svg style="left:33px;top:652px" width="6" height="6"><use href="#wi"/></svg><svg style="left:34px;top:658px" width="14" height="8"><use href="#dr"/></svg><p style="left:54px;top:650px">Système (C:)</p>
<svg style="left:34px;top:682px" width="14" height="8"><use href="#dr"/></svg><p style="left:54px;top:674px">Stockage (D:)</p>
<svg style="left:25px;top:706px" width="16" height="16"><use href="#ne"/></svg><p style="left:46px;top:706px">Réseau</p>
</div>

<!-- text below left window -->
<div class="k" style="left:0;top:812px;width:760px;height:10px;overflow:hidden;background:#fff">
<p style="left:-12px;top:-15px;font-size:20px;line-height:24px;height:24px;color:#111;letter-spacing:0">Correspondents :</p>
</div>

<!-- drag ghost -->
<div class="k" style="left:316px;top:102px;width:103px;height:103px;background:linear-gradient(rgba(204,232,255,.3),rgba(204,232,255,.68));border:1px solid rgba(153,209,255,.45);box-sizing:border-box;box-shadow:2px 2px 3px rgba(0,0,0,.25)"></div>
<div class="k" style="left:337px;top:107px;width:57px;height:90px;background:linear-gradient(#4a4340 0,#4a4340 90%,#3f4449 90%,#3f4449 100%);opacity:.96;clip-path:polygon(0 0,52px 0,52px 2px,54px 2px,54px 5px,57px 5px,57px 100%,3px 100%,3px 97%,1px 97%,1px 93%,0 93%)"></div>
<div class="k" style="left:351px;top:144px;width:31px;height:17px;background:#0078d7;border:1px solid #fff;box-sizing:border-box;color:#fff;text-align:center;line-height:15px;font-size:12px;font-weight:bold;letter-spacing:0">189</div>
<!-- tooltip -->
<div class="k" style="left:378px;top:207px;width:117px;height:20px;background:#fff;border:1px solid #6e6e6e;box-sizing:border-box"></div>
<svg style="left:383px;top:211px" width="11" height="11" stroke="#0b3fb0" stroke-width="2"><path d="M5.500 0v11M0 5.500h11"/></svg>
<p style="left:398px;top:209px;color:#1c1c7c;letter-spacing:-.3px">Copier sur brutes</p>

<!-- arrow & overlay -->
<svg style="left:0;top:0;z-index:50" width="1884" height="822">
<path d="M534 225L1096 379" stroke="#ff9900" stroke-width="10" fill="none"/>
<path d="M509 217L539 212 533 237z" fill="#ff9900"/>
<g font-family="Liberation Serif,serif" font-style="italic" font-weight="bold" font-size="43" fill="#ff9900" stroke="#111" stroke-width="1.200" style="paint-order:stroke;filter:drop-shadow(2px 2px 2px rgba(0,0,0,.55))">
<text x="1178" y="390" textLength="467" lengthAdjust="spacingAndGlyphs">CTRL + A pour sélectionner</text>
<text x="1177" y="487" textLength="468" lengthAdjust="spacingAndGlyphs">toutes les images du dossier</text>
</g>
</svg>
</div></body></html>
